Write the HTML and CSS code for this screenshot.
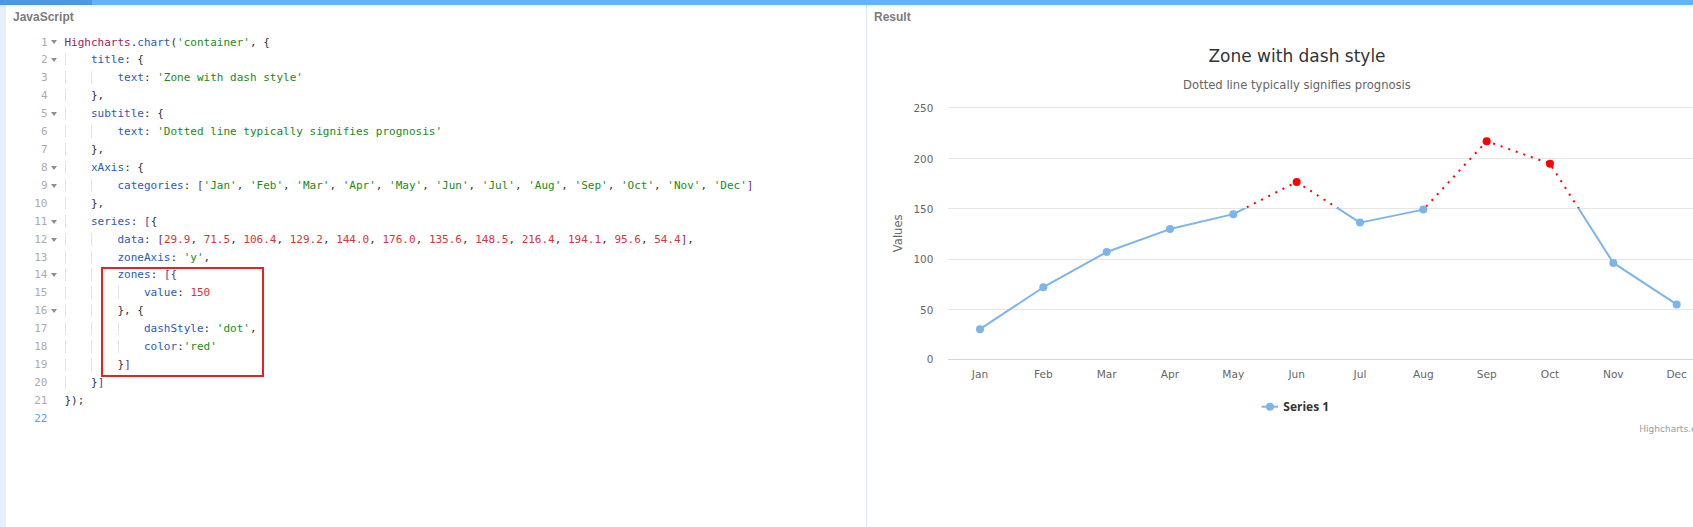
FILE: index.html
```html
<!DOCTYPE html>
<html lang="en">
<head>
<meta charset="utf-8">
<title>Zone with dash style</title>
<link rel="stylesheet" href="styles.css">
</head>
<body>
<div class="topbar"><div class="topbar-tab"></div></div>
<div class="main">
  <div class="edge"></div>
  <section class="panel js-panel">
    <div class="panel-label">JavaScript</div>
    <div class="code">
      <div class="line"><span class="ln">1</span><span class="fold"><span class="arrow"></span></span><span class="src"><span class="v">Highcharts</span>.<span class="k">chart</span>(<span class="s">'container'</span>, {</span></div>
      <div class="line"><span class="ln">2</span><span class="fold"><span class="arrow"></span></span><span class="src"><span class="g">    </span><span class="k">title</span>: {</span></div>
      <div class="line"><span class="ln">3</span><span class="fold"></span><span class="src"><span class="g">    </span><span class="g">    </span><span class="k">text</span>: <span class="s">'Zone with dash style'</span></span></div>
      <div class="line"><span class="ln">4</span><span class="fold"></span><span class="src"><span class="g">    </span>},</span></div>
      <div class="line"><span class="ln">5</span><span class="fold"><span class="arrow"></span></span><span class="src"><span class="g">    </span><span class="k">subtitle</span>: {</span></div>
      <div class="line"><span class="ln">6</span><span class="fold"></span><span class="src"><span class="g">    </span><span class="g">    </span><span class="k">text</span>: <span class="s">'Dotted line typically signifies prognosis'</span></span></div>
      <div class="line"><span class="ln">7</span><span class="fold"></span><span class="src"><span class="g">    </span>},</span></div>
      <div class="line"><span class="ln">8</span><span class="fold"><span class="arrow"></span></span><span class="src"><span class="g">    </span><span class="k">xAxis</span>: {</span></div>
      <div class="line"><span class="ln">9</span><span class="fold"><span class="arrow"></span></span><span class="src"><span class="g">    </span><span class="g">    </span><span class="k">categories</span>: <span class="b">[</span><span class="s">'Jan'</span>, <span class="s">'Feb'</span>, <span class="s">'Mar'</span>, <span class="s">'Apr'</span>, <span class="s">'May'</span>, <span class="s">'Jun'</span>, <span class="s">'Jul'</span>, <span class="s">'Aug'</span>, <span class="s">'Sep'</span>, <span class="s">'Oct'</span>, <span class="s">'Nov'</span>, <span class="s">'Dec'</span><span class="b">]</span></span></div>
      <div class="line"><span class="ln">10</span><span class="fold"></span><span class="src"><span class="g">    </span>},</span></div>
      <div class="line"><span class="ln">11</span><span class="fold"><span class="arrow"></span></span><span class="src"><span class="g">    </span><span class="k">series</span>: <span class="b">[</span>{</span></div>
      <div class="line"><span class="ln">12</span><span class="fold"><span class="arrow"></span></span><span class="src"><span class="g">    </span><span class="g">    </span><span class="k">data</span>: <span class="b">[</span><span class="n">29.9</span>, <span class="n">71.5</span>, <span class="n">106.4</span>, <span class="n">129.2</span>, <span class="n">144.0</span>, <span class="n">176.0</span>, <span class="n">135.6</span>, <span class="n">148.5</span>, <span class="n">216.4</span>, <span class="n">194.1</span>, <span class="n">95.6</span>, <span class="n">54.4</span><span class="b">]</span>,</span></div>
      <div class="line"><span class="ln">13</span><span class="fold"></span><span class="src"><span class="g">    </span><span class="g">    </span><span class="k">zoneAxis</span>: <span class="s">'y'</span>,</span></div>
      <div class="line"><span class="ln">14</span><span class="fold"><span class="arrow"></span></span><span class="src"><span class="g">    </span><span class="g">    </span><span class="k">zones</span>: <span class="b">[</span><span class="b">{</span></span></div>
      <div class="line"><span class="ln">15</span><span class="fold"></span><span class="src"><span class="g">    </span><span class="g">    </span><span class="g">    </span><span class="k">value</span>: <span class="n">150</span></span></div>
      <div class="line"><span class="ln">16</span><span class="fold"><span class="arrow"></span></span><span class="src"><span class="g">    </span><span class="g">    </span>}, {</span></div>
      <div class="line"><span class="ln">17</span><span class="fold"></span><span class="src"><span class="g">    </span><span class="g">    </span><span class="g">    </span><span class="k">dashStyle</span>: <span class="s">'dot'</span>,</span></div>
      <div class="line"><span class="ln">18</span><span class="fold"></span><span class="src"><span class="g">    </span><span class="g">    </span><span class="g">    </span><span class="k">color</span>:<span class="s">'red'</span></span></div>
      <div class="line"><span class="ln">19</span><span class="fold"></span><span class="src"><span class="g">    </span><span class="g">    </span>}<span class="b">]</span></span></div>
      <div class="line"><span class="ln">20</span><span class="fold"></span><span class="src"><span class="g">    </span>}<span class="b">]</span></span></div>
      <div class="line"><span class="ln">21</span><span class="fold"></span><span class="src">});</span></div>
      <div class="line current"><span class="ln">22</span><span class="fold"></span><span class="src"></span></div>
    </div>
    <div class="highlight-box"></div>
  </section>
  <section class="panel result-panel">
    <div class="panel-label">Result</div>
    <svg class="chart" width="860" height="480" viewBox="0 0 860 480" xmlns="http://www.w3.org/2000/svg">
      <defs>
        <clipPath id="zone-above"><rect x="70" y="0" width="790" height="179.1"/></clipPath>
        <clipPath id="zone-below"><rect x="70" y="179.1" width="790" height="200"/></clipPath>
      </defs>
      <text class="title" x="430" y="33" text-anchor="middle">Zone with dash style</text>
      <text class="subtitle" x="430" y="60" text-anchor="middle">Dotted line typically signifies prognosis</text>

      <g class="grid">
        <line x1="81.3" x2="841.3" y1="78.5" y2="78.5"/>
        <line x1="81.3" x2="841.3" y1="129.5" y2="129.5"/>
        <line x1="81.3" x2="841.3" y1="179.5" y2="179.5"/>
        <line x1="81.3" x2="841.3" y1="230.5" y2="230.5"/>
        <line x1="81.3" x2="841.3" y1="280.5" y2="280.5"/>
      </g>
      <line class="axis" x1="81.3" x2="841.3" y1="330.5" y2="330.5"/>

      <g class="ylabels" text-anchor="end">
        <text x="66.3" y="83">250</text>
        <text x="66.3" y="133.5">200</text>
        <text x="66.3" y="183.5">150</text>
        <text x="66.3" y="234">100</text>
        <text x="66.3" y="284.5">50</text>
        <text x="66.3" y="334">0</text>
      </g>
      <text class="ytitle" transform="translate(35 204.3) rotate(-90)" text-anchor="middle">Values</text>

      <g class="xlabels" text-anchor="middle">
        <text x="113" y="349">Jan</text>
        <text x="176.3" y="349">Feb</text>
        <text x="239.7" y="349">Mar</text>
        <text x="303" y="349">Apr</text>
        <text x="366.3" y="349">May</text>
        <text x="429.7" y="349">Jun</text>
        <text x="493" y="349">Jul</text>
        <text x="556.3" y="349">Aug</text>
        <text x="619.7" y="349">Sep</text>
        <text x="683" y="349">Oct</text>
        <text x="746.3" y="349">Nov</text>
        <text x="809.7" y="349">Dec</text>
      </g>

      <path class="series-blue" clip-path="url(#zone-below)" d="M113 300.16 L176.33 258.23 L239.67 223.05 L303 200.07 L366.33 185.15 L429.67 152.89 L493 193.62 L556.33 180.61 L619.67 112.17 L683 134.65 L746.33 233.94 L809.67 275.46"/>
      <path class="series-red" clip-path="url(#zone-above)" d="M113 300.16 L176.33 258.23 L239.67 223.05 L303 200.07 L366.33 185.15 L429.67 152.89 L493 193.62 L556.33 180.61 L619.67 112.17 L683 134.65 L746.33 233.94 L809.67 275.46"/>

      <g class="markers-blue">
        <circle cx="113" cy="300.16" r="4"/>
        <circle cx="176.33" cy="258.23" r="4"/>
        <circle cx="239.67" cy="223.05" r="4"/>
        <circle cx="303" cy="200.07" r="4"/>
        <circle cx="366.33" cy="185.15" r="4"/>
        <circle cx="493" cy="193.62" r="4"/>
        <circle cx="556.33" cy="180.61" r="4"/>
        <circle cx="746.33" cy="233.94" r="4"/>
        <circle cx="809.67" cy="275.46" r="4"/>
      </g>
      <g class="markers-red">
        <circle cx="429.67" cy="152.89" r="4"/>
        <circle cx="619.67" cy="112.17" r="4"/>
        <circle cx="683" cy="134.65" r="4"/>
      </g>

      <g class="legend">
        <line x1="394.7" x2="411" y1="377.7" y2="377.7"/>
        <circle cx="403" cy="377.7" r="4"/>
        <text x="416.3" y="382">Series 1</text>
      </g>
      <text class="credits" x="772.3" y="403">Highcharts.com</text>
    </svg>
  </section>
</div>
</body>
</html>
```

FILE: styles.css
```css
html, body {
  margin: 0;
  padding: 0;
  background: #ffffff;
}

body {
  width: 1693px;
  height: 527px;
  overflow: hidden;
  font-family: "Liberation Sans", Arial, sans-serif;
}

.topbar {
  height: 5px;
  background: #64b2fb;
  display: flex;
  box-shadow: 0 1px 3px rgba(0, 0, 0, 0.08);
  position: relative;
  z-index: 2;
}

.topbar-tab {
  width: 92px;
  background: #4e97e2;
}

.main {
  display: flex;
  height: 522px;
}

.edge {
  width: 6px;
  flex: none;
  background: #e6effa;
}

.panel {
  display: flex;
  flex-direction: column;
}

.js-panel {
  width: 860px;
  flex: none;
  position: relative;
}

.result-panel {
  flex: 1;
  min-width: 0;
  overflow: hidden;
  border-left: 1px solid #dbe7f5;
}

.panel-label {
  height: 24px;
  line-height: 24px;
  padding-left: 7px;
  font-family: "Liberation Sans", Arial, sans-serif;
  font-weight: bold;
  font-size: 12px;
  color: #7b7b7b;
}

.code {
  padding-top: 4.5px;
  font-family: "DejaVu Sans Mono", "Liberation Mono", monospace;
  font-size: 11px;
  color: #333333;
}

.line {
  display: flex;
  height: 17.93px;
  line-height: 17.93px;
}

.ln {
  width: 41.5px;
  flex: none;
  text-align: right;
  color: #ababab;
}

.current .ln {
  color: #5aa2e8;
}

.fold {
  width: 17px;
  flex: none;
  display: flex;
  align-items: center;
  padding-left: 3.5px;
  box-sizing: border-box;
}

.arrow {
  width: 0;
  height: 0;
  border-left: 3px solid transparent;
  border-right: 3px solid transparent;
  border-top: 4px solid #8e8e8e;
}

.src {
  white-space: pre;
}

.g {
  box-shadow: inset 1px 0 0 #e4e4e4;
}

.v { color: #9b1e5a; }
.k { color: #2a5bb4; }
.s { color: #188a18; }
.n { color: #d5353d; }
.b { color: #6a2d91; }

.highlight-box {
  position: absolute;
  left: 95px;
  top: 262px;
  width: 163px;
  height: 110px;
  box-sizing: border-box;
  border: 2px solid #e8201f;
}

.chart {
  display: block;
  flex: none;
  font-family: "DejaVu Sans", "Liberation Sans", sans-serif;
}

.title {
  font-size: 17px;
  fill: #333333;
}

.subtitle {
  font-size: 11.6px;
  fill: #666666;
}

.grid line {
  stroke: #e6e6e6;
  stroke-width: 1;
  shape-rendering: crispEdges;
}

.axis {
  stroke: #ccd6eb;
  stroke-width: 1;
  shape-rendering: crispEdges;
}

.ylabels text {
  font-size: 10.4px;
  fill: #666666;
}

.xlabels text {
  font-size: 10.6px;
  fill: #666666;
}

.ytitle {
  font-size: 11.6px;
  fill: #666666;
}

.series-blue {
  fill: none;
  stroke: #7cb5ec;
  stroke-width: 2;
  stroke-linejoin: round;
  stroke-linecap: round;
}

.series-red {
  fill: none;
  stroke: #ff0000;
  stroke-width: 2;
  stroke-dasharray: 2 6;
}

.markers-blue circle {
  fill: #7cb5ec;
}

.markers-red circle {
  fill: #ff0000;
}

.legend line {
  stroke: #7cb5ec;
  stroke-width: 2;
}

.legend circle {
  fill: #7cb5ec;
}

.legend text {
  font-family: "Open Sans", "DejaVu Sans", sans-serif;
  font-weight: bold;
  font-size: 12px;
  fill: #333333;
}

.credits {
  font-size: 9px;
  fill: #999999;
}
```
